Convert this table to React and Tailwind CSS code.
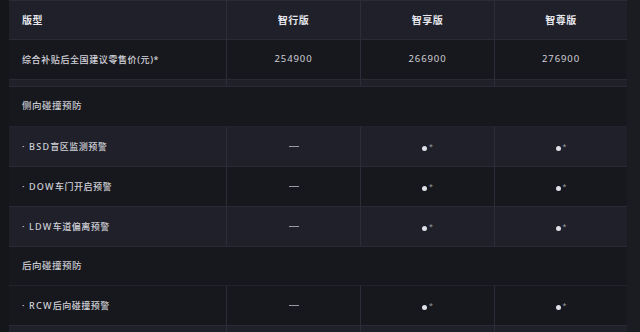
import React from 'react';

const trims = ['智行版', '智享版', '智尊版'];

const sections = [
  {
    title: '侧向碰撞预防',
    rows: [
      { code: 'BSD', name: '盲区监测预警', values: ['-', 'dot', 'dot'] },
      { code: 'DOW', name: '车门开启预警', values: ['-', 'dot', 'dot'] },
      { code: 'LDW', name: '车道偏离预警', values: ['-', 'dot', 'dot'] },
    ],
  },
  {
    title: '后向碰撞预防',
    rows: [
      { code: 'RCW', name: '后向碰撞预警', values: ['-', 'dot', 'dot'] },
      { code: '', name: '', values: [] },
    ],
  },
];

const cols = 'grid grid-cols-[217px_134px_134px_133px] shrink-0';
const font = { fontFamily: '"Noto Sans", "Noto Sans CJK SC", sans-serif' };

function Mark({ v }) {
  if (v === '-') return <span className="block w-[10px] h-[1.5px] bg-[#9a9aa5]" />;
  return (
    <span className="flex items-start">
      <span className="mt-[3px] block w-[5px] h-[5px] rounded-full bg-[#e0e0e8]" />
      <span className="ml-[2px] text-[7px] leading-none text-[#a0a0ab]">*</span>
    </span>
  );
}

function Row({ light, children, height = 'h-[40px]' }) {
  return (
    <div className={`${cols} ${height} border-b border-[#292a34] ${light ? 'bg-[#1f2029]' : 'bg-[#17181d]'}`}>
      {children}
    </div>
  );
}

const cell = 'flex items-center justify-center border-l border-[#2c2d38]';

export default function App() {
  let idx = 0;
  return (
    <div className="w-[640px] h-[332px] overflow-hidden bg-[#15161a] flex" style={font}>
      <div className="w-[9px] shrink-0" />
      <div className="w-[618px] shrink-0 flex flex-col">
        {/* 表头 */}
        <div className={`${cols} h-[40px] bg-[#1f2029] border-y border-[#2a2b35]`}>
          <div className="flex items-center pl-[13px] text-[10px] font-bold text-[#e6e6ec] tracking-[0.5px]">版型</div>
          {trims.map((t) => (
            <div key={t} className={`${cell} text-[10px] font-bold text-[#e6e6ec] tracking-[0.5px]`}>{t}</div>
          ))}
        </div>

        {/* 价格 */}
        <Row>
          <div className="flex items-center pl-[13px] text-[9px] font-medium text-[#d4d4dc] tracking-[0.6px]">
            综合补贴后全国建议零售价(元)*
          </div>
          {['254900', '266900', '276900'].map((p) => (
            <div key={p} className={`${cell} text-[9.5px] text-[#cfcfd7] tracking-[0.9px]`}>{p}</div>
          ))}
        </Row>
        <Row light height="h-[7px]">
          <div />
          <div className={cell} />
          <div className={cell} />
          <div className={cell} />
        </Row>

        {sections.map((s, si) => (
          <React.Fragment key={s.title}>
            <div className={`${si === 0 ? 'h-[40px]' : 'h-[39px]'} shrink-0 flex items-center pl-[13px] bg-[#17181d] border-b border-[#22232b] text-[9.5px] font-medium text-[#c8c8d0] tracking-[0.5px]`}>
              {s.title}
            </div>
            {s.rows.map((r, ri) => {
              idx += 1;
              return (
                <Row key={ri} light={idx % 2 === 1}>
                  <div className="flex items-center pl-[13px] text-[9px] font-medium text-[#d0d0d8] tracking-[0.5px]">
                    {r.code && <span className="mr-[4px]">·</span>}
                    <span className="tracking-[1.3px]">{r.code}</span>
                    <span>{r.name}</span>
                  </div>
                  {[0, 1, 2].map((i) => (
                    <div key={i} className={cell}>
                      {r.values[i] && <Mark v={r.values[i]} />}
                    </div>
                  ))}
                </Row>
              );
            })}
          </React.Fragment>
        ))}
      </div>
      <div className="w-[13px] shrink-0 bg-[#1b1c22]" />
    </div>
  );
}
